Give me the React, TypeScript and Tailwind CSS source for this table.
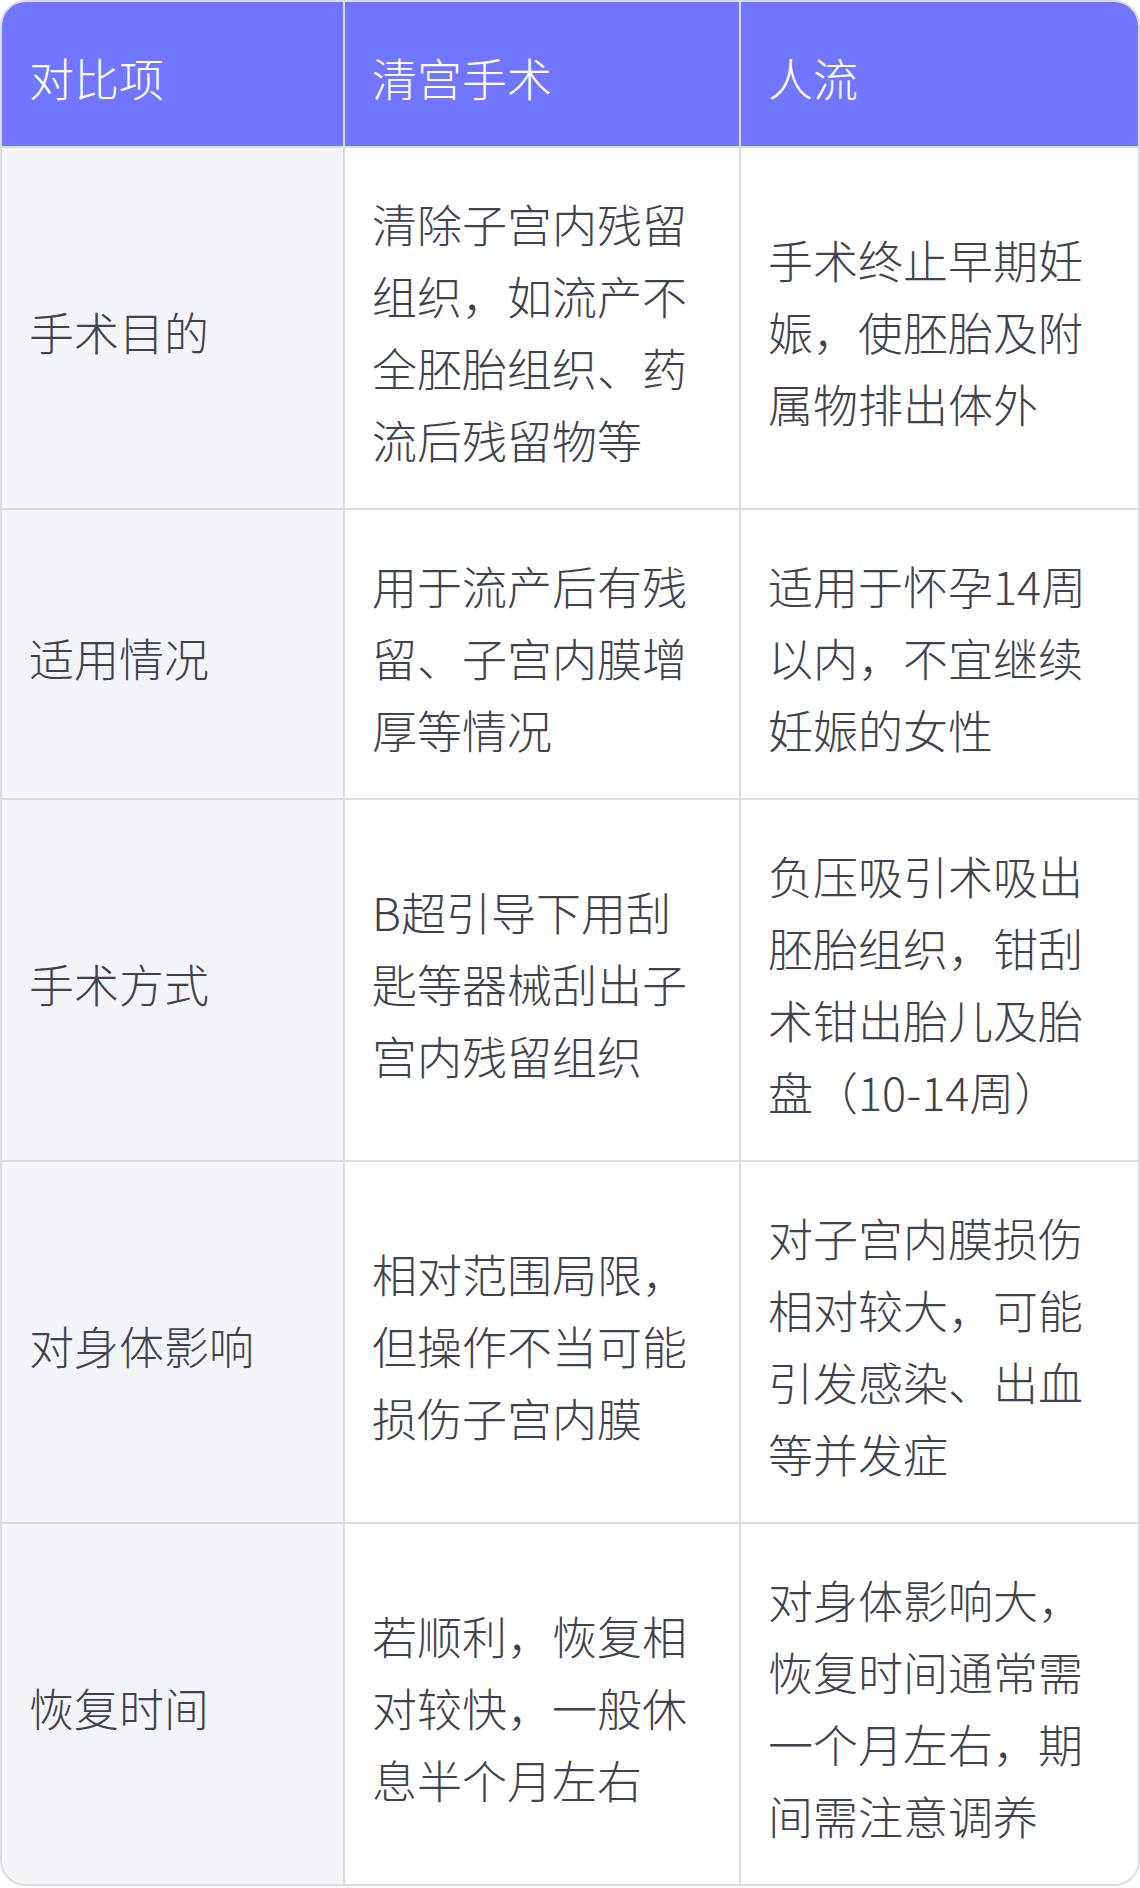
import { FC } from 'react';

// Rows of the comparison table: [item, curettage, abortion]
const ROWS: [string, string, string][] = [
  ['手术目的', '清除子宫内残留组织，如流产不全胚胎组织、药流后残留物等', '手术终止早期妊娠，使胚胎及附属物排出体外'],
  ['适用情况', '用于流产后有残留、子宫内膜增厚等情况', '适用于怀孕14周以内，不宜继续妊娠的女性'],
  ['手术方式', 'B超引导下用刮匙等器械刮出子宫内残留组织', '负压吸引术吸出胚胎组织，钳刮术钳出胎儿及胎盘（10-14周）'],
  ['对身体影响', '相对范围局限，但操作不当可能损伤子宫内膜', '对子宫内膜损伤相对较大，可能引发感染、出血等并发症'],
  ['恢复时间', '若顺利，恢复相对较快，一般休息半个月左右', '对身体影响大，恢复时间通常需一个月左右，期间需注意调养'],
];

const HEADERS = ['对比项', '清宫手术', '人流'];

const App: FC = () => {
  return (
    <div className="w-[1140px] bg-white font-['Noto_Sans_CJK_SC','Noto_Sans',sans-serif] font-light">
      <div className="grid grid-cols-[343px_396px_1fr] overflow-hidden rounded-[26px] border-2 border-[#dcdde2] text-[45px] leading-[72px]">
        {HEADERS.map((h, i) => (
          <div
            key={h}
            className={`bg-[#7176ff] px-[27px] pt-10 pb-8 text-white border-b-2 border-[#dcdde2] ${i < 2 ? 'border-r-2' : ''}`}
          >
            {h}
          </div>
        ))}

        {ROWS.map(([label, a, b], r) => {
          const last = r === ROWS.length - 1;
          return (
            <div key={label} className="contents">
              <div
                className={`flex items-center bg-[#f4f5f9] px-[27px] pt-10 pb-8 text-[#40434d] border-r-2 border-[#dcdde2] ${last ? '' : 'border-b-2'}`}
              >
                {label}
              </div>
              <div
                className={`flex items-center bg-white px-[27px] pt-10 pb-8 text-[#40434d] border-r-2 border-[#dcdde2] ${last ? '' : 'border-b-2'}`}
              >
                <p>{a}</p>
              </div>
              <div
                className={`flex items-center bg-white px-[27px] pt-10 pb-8 text-[#40434d] border-[#dcdde2] ${last ? '' : 'border-b-2'}`}
              >
                <p>{b}</p>
              </div>
            </div>
          );
        })}
      </div>
    </div>
  );
};

export default App;
